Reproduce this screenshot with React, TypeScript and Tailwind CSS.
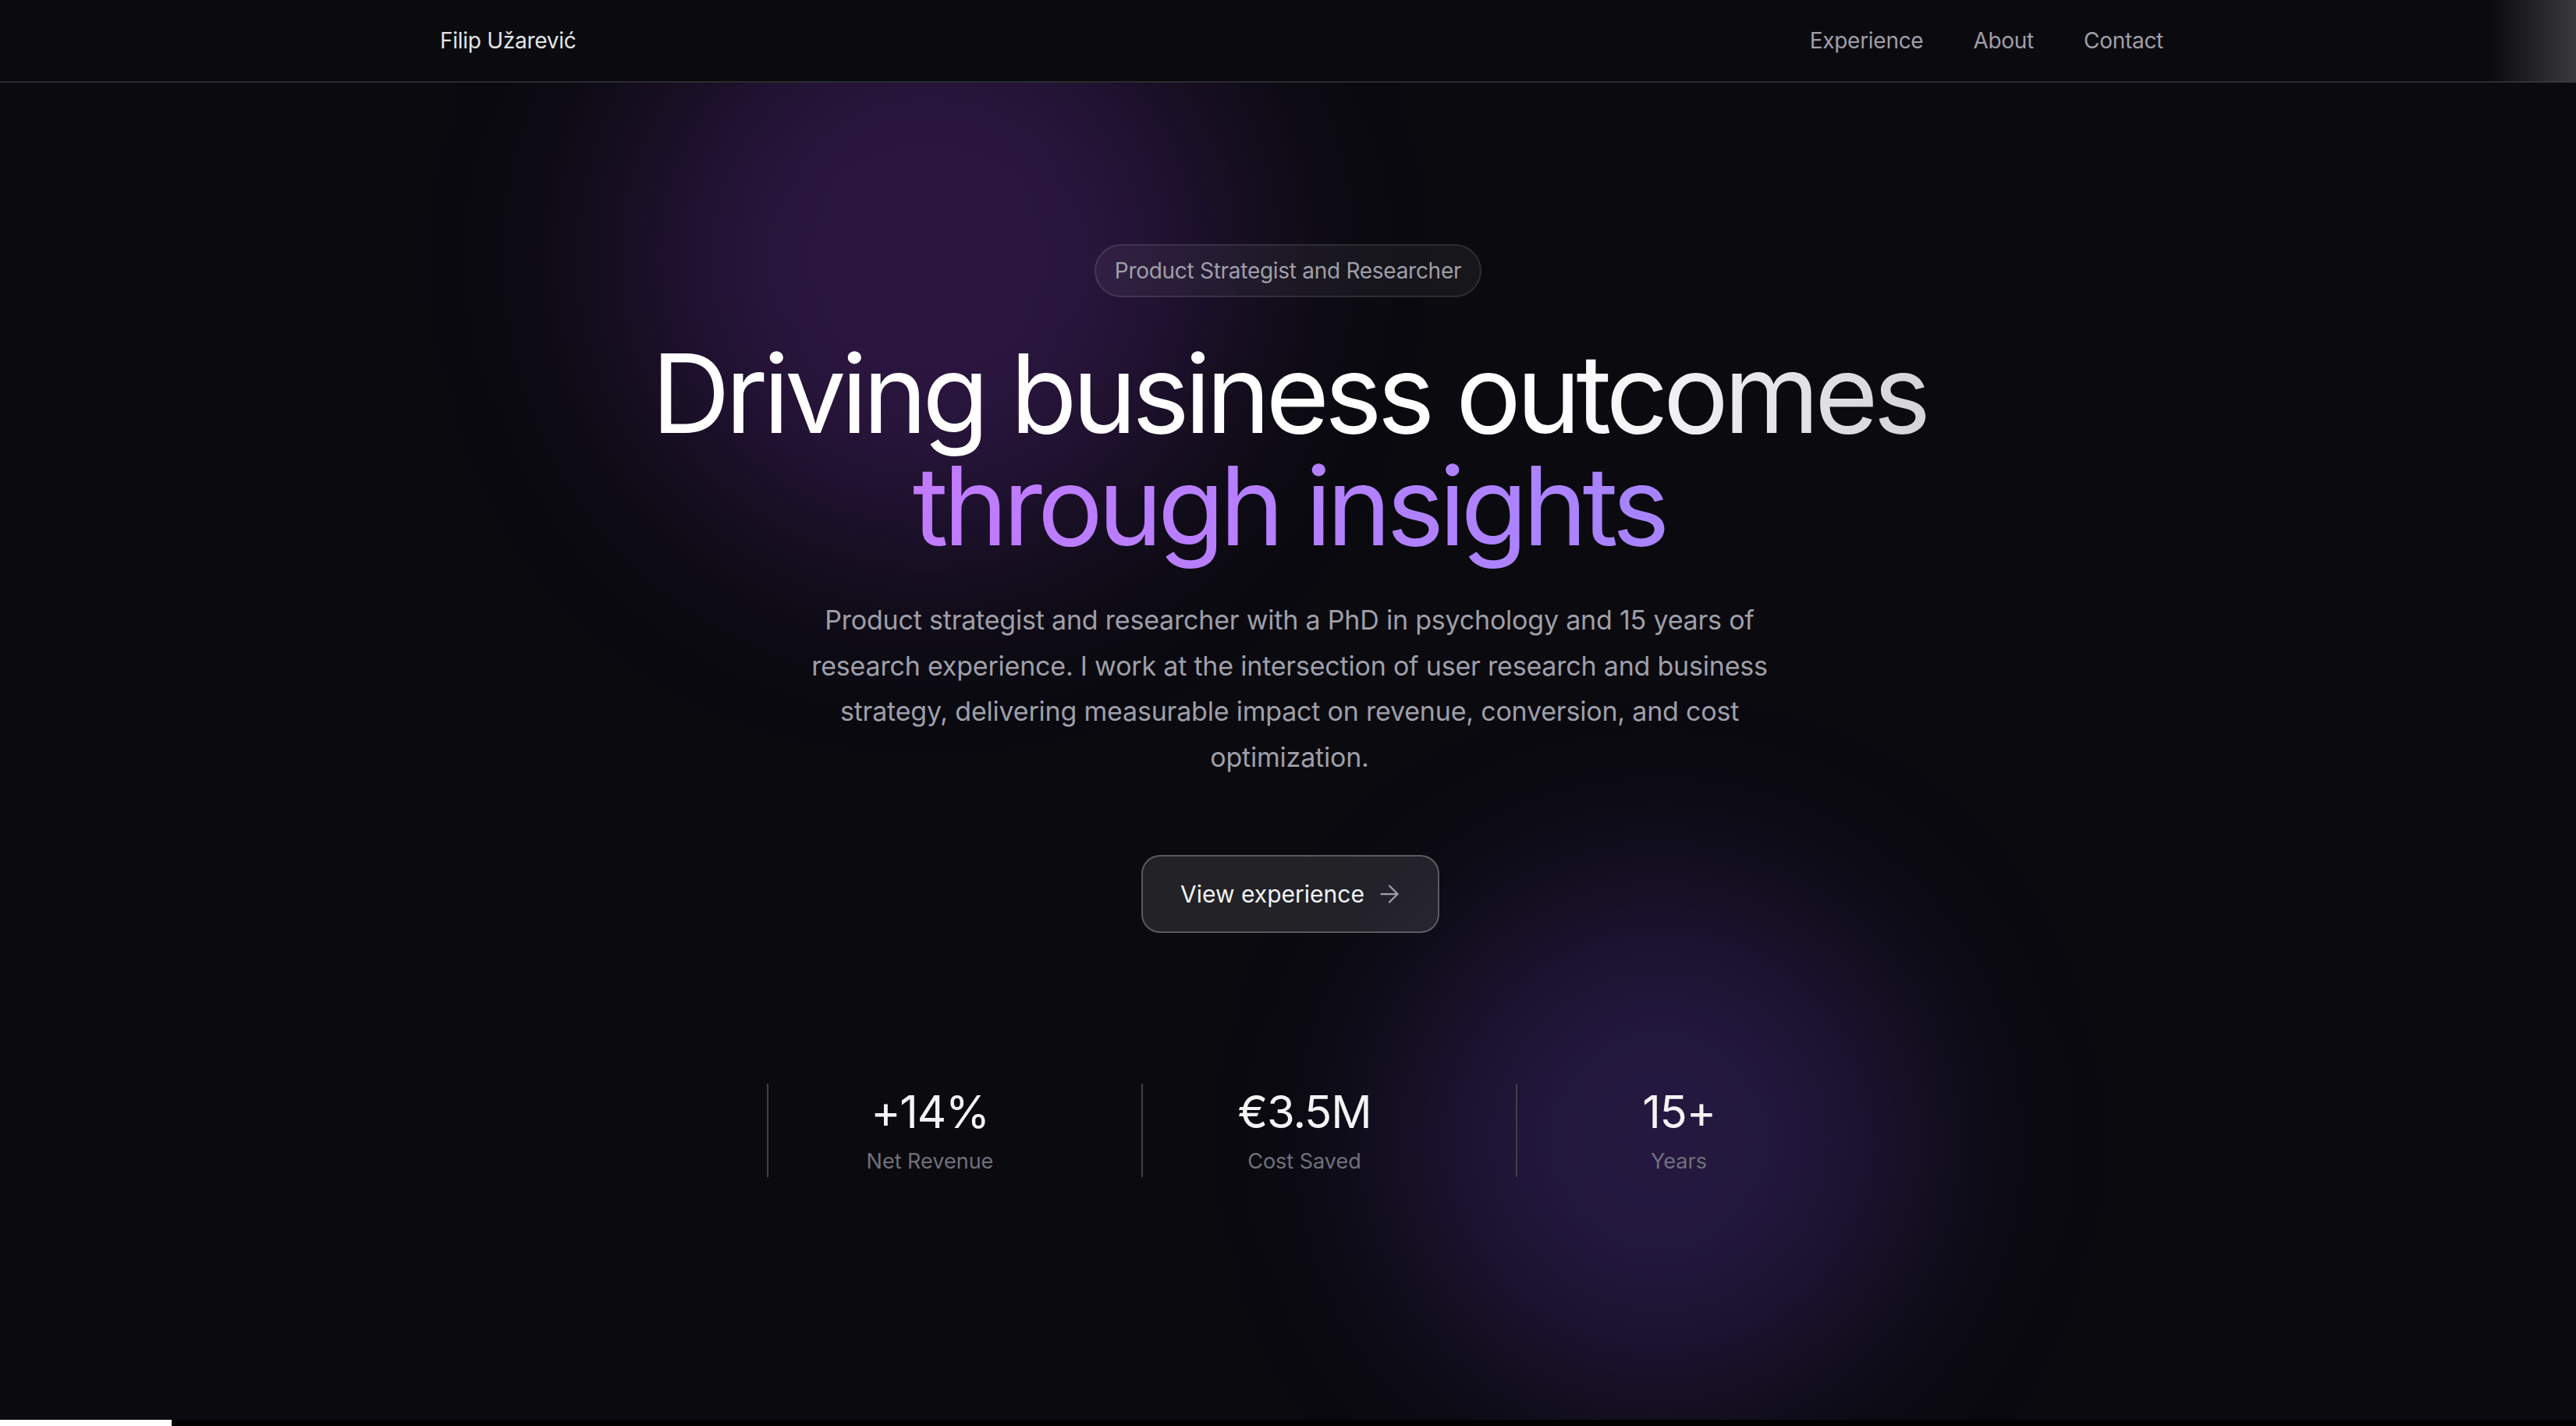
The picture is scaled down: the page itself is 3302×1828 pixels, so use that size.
import { ArrowRight } from "lucide-react";

const stats = [
  { value: "+14%", label: "Net Revenue" },
  { value: "€3.5M", label: "Cost Saved" },
  { value: "15+", label: "Years" },
];

export default function App() {
  return (
    <div className="relative flex h-[1828px] w-full flex-col overflow-hidden bg-[#0a0a0f] font-['Inter',sans-serif] antialiased">
      {/* background glows */}
      <div className="pointer-events-none absolute left-[806px] top-[-54px] h-[768px] w-[768px] rounded-full bg-purple-500/20 blur-[128px]" />
      <div className="pointer-events-none absolute left-[1797px] top-[1133px] h-[660px] w-[660px] rounded-full bg-violet-500/20 blur-[120px]" />

      {/* header */}
      <header className="relative z-10 flex h-[106px] shrink-0 items-center justify-between border-b-2 border-[#2a2a30] bg-[#0b0b0f] pl-[564px] pr-[529px]">
        <a className="text-[28px] leading-[40px] tracking-[-0.01em] text-zinc-200">Filip Užarević</a>
        <nav className="flex items-center gap-[64px] text-[28px] leading-[40px] tracking-[-0.01em] text-zinc-400">
          <a>Experience</a>
          <a>About</a>
          <a>Contact</a>
        </nav>
        <div className="pointer-events-none absolute right-0 top-0 bottom-[-2px] w-[110px] bg-gradient-to-r from-transparent to-[#3a3a3d]" />
      </header>

      {/* hero */}
      <main className="relative z-10 flex flex-1 flex-col items-center pt-[207px]">
        <span className="rounded-full border-2 border-white/10 bg-white/5 px-[24px] py-[12px] text-[28px] leading-[40px] tracking-[-0.01em] text-zinc-400">
          Product Strategist and Researcher
        </span>

        <h1 className="mt-[51px] flex flex-col items-center pl-[2px] text-center text-[140px] font-normal leading-[144px] tracking-[-0.045em]">
          <span className="-mb-[30px] bg-gradient-to-r from-white from-70% to-zinc-300 bg-clip-text px-[8px] pb-[30px] text-transparent">
            Driving business outcomes
          </span>
          <span className="-mb-[30px] bg-gradient-to-r from-purple-400 to-violet-400 bg-clip-text px-[8px] pb-[30px] text-transparent">
            through insights
          </span>
        </h1>

        <p className="mt-[46px] pl-[4px] text-center text-[34px] leading-[58.5px] tracking-[-0.006em] text-zinc-400">
          Product strategist and researcher with a PhD in psychology and 15 years of
          <br />
          research experience. I work at the intersection of user research and business
          <br />
          strategy, delivering measurable impact on revenue, conversion, and cost
          <br />
          optimization.
        </p>

        <button className="mt-[96px] ml-[6px] flex items-center gap-[14px] rounded-[24px] border-2 border-white/25 bg-white/10 py-[24px] pl-[48px] pr-[44px] text-[30px] leading-[48px] text-zinc-100">
          View experience
          <ArrowRight size={36} strokeWidth={1.5} className="text-zinc-400" />
        </button>

        <div className="mt-[193px] flex gap-[64px] pl-[40px]">
          {stats.map((s) => (
            <div key={s.label} className="flex w-[416px] flex-col items-center border-l-2 border-[#3f3f46]">
              <span className="text-[58px] leading-[72px] tracking-[-0.02em] text-zinc-100">{s.value}</span>
              <span className="mt-[8px] text-[27px] leading-[40px] text-zinc-500">{s.label}</span>
            </div>
          ))}
        </div>
      </main>

      {/* bottom scrollbar strip */}
      <div className="relative z-10 flex h-[8px] shrink-0">
        <div className="w-[220px] bg-white" />
        <div className="flex-1 bg-black" />
      </div>
    </div>
  );
}
